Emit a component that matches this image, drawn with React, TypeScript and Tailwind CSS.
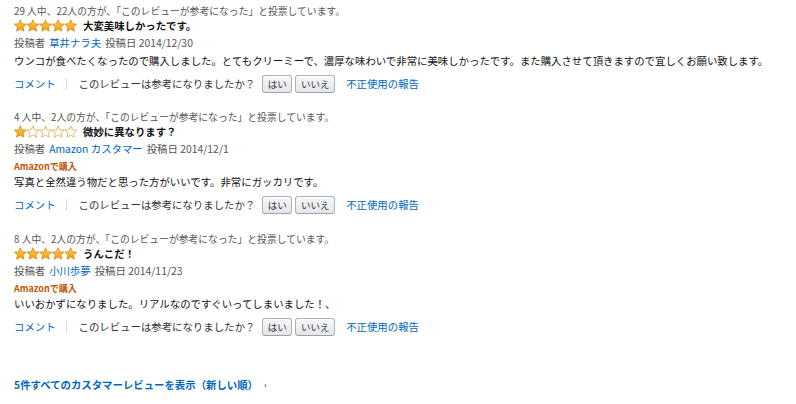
import React from "react";

const FONT = { fontFamily: '"Noto Sans CJK JP", "Noto Sans", sans-serif' };

const STAR =
  "M6.3 0.3 L8 4.25 L12.29 4.65 L9.06 7.5 L10 11.7 L6.3 9.5 L2.6 11.7 L3.54 7.5 L0.31 4.65 L4.6 4.25 Z";

function Stars({ n }: { n: number }) {
  return (
    <svg width="64" height="13" viewBox="0 0 64 13" className="block">
      <defs>
        <linearGradient id="sg" x1="0" y1="0" x2="0" y2="1">
          <stop offset="0" stopColor="#ffcf4f" />
          <stop offset="1" stopColor="#f29b12" />
        </linearGradient>
      </defs>
      {[0, 1, 2, 3, 4].map((i) => (
        <path
          key={i}
          d={STAR}
          transform={`translate(${i * 12.6} 0.5)`}
          fill={i < n ? "url(#sg)" : "#ffffff"}
          stroke={i < n ? "#d68a10" : "#e0a64a"}
          strokeWidth="0.8"
          strokeLinejoin="round"
        />
      ))}
    </svg>
  );
}

function Btn({ children, w }: { children: React.ReactNode; w: string }) {
  return (
    <div
      className={`${w} h-[18px] flex items-center justify-center rounded-[3px] border border-[#adb1b8] border-b-[#9ea2a8] bg-gradient-to-b from-[#f7f8fa] to-[#e4e6ea] text-[9.5px] text-[#333] shadow-[inset_0_1px_0_#ffffff]`}
    >
      {children}
    </div>
  );
}

type Review = {
  votes: string;
  stars: number;
  title: string;
  author: string;
  date: string;
  verified: boolean;
  body: string;
};

const reviews: Review[] = [
  {
    votes: "29 人中、22人の方が、「このレビューが参考になった」と投票しています。",
    stars: 5,
    title: "大変美味しかったです。",
    author: "草井ナラ夫",
    date: "2014/12/30",
    verified: false,
    body: "ウンコが食べたくなったので購入しました。とてもクリーミーで、濃厚な味わいで非常に美味しかったです。また購入させて頂きますので宜しくお願い致します。",
  },
  {
    votes: "4 人中、2人の方が、「このレビューが参考になった」と投票しています。",
    stars: 1,
    title: "微妙に異なります？",
    author: "Amazon カスタマー",
    date: "2014/12/1",
    verified: true,
    body: "写真と全然違う物だと思った方がいいです。非常にガッカリです。",
  },
  {
    votes: "8 人中、2人の方が、「このレビューが参考になった」と投票しています。",
    stars: 5,
    title: "うんこだ！",
    author: "小川歩夢",
    date: "2014/11/23",
    verified: true,
    body: "いいおかずになりました。リアルなのですぐいってしまいました！、",
  },
];

function ReviewBlock({ r, mt }: { r: Review; mt: string }) {
  return (
    <div className={`${mt} flex flex-col`}>
      <div className="h-[16px] flex items-center text-[9.8px] text-[#555] whitespace-nowrap">
        {r.votes}
      </div>
      <div className="h-[13px] flex items-center gap-[5px]">
        <Stars n={r.stars} />
        <span className="text-[10.4px] font-bold text-[#111] whitespace-nowrap">{r.title}</span>
      </div>
      <div className="mt-[2px] h-[18px] flex items-center text-[10.4px] text-[#555] whitespace-nowrap">
        <span>投稿者</span>
        <span className="ml-[4px] text-[#0066c0]">{r.author}</span>
        <span className="ml-[4px]">投稿日 {r.date}</span>
      </div>
      {r.verified && (
        <div className="mt-[3px] h-[12px] flex items-center text-[9px] font-bold text-[#c45500] whitespace-nowrap">
          Amazonで購入
        </div>
      )}
      <div className="h-[18px] flex items-center text-[10.4px] text-[#111] whitespace-nowrap">
        {r.body}
      </div>
      <div className="mt-[4px] h-[20px] flex items-center text-[10.4px] whitespace-nowrap">
        <span className="text-[#0066c0]">コメント</span>
        <span className="ml-[10px] w-px h-[12px] bg-[#dddddd]" />
        <span className="ml-[12px] text-[#333]">このレビューは参考になりましたか？</span>
        <div className="ml-[7px] flex items-center gap-[3px]">
          <Btn w="w-[30px]">はい</Btn>
          <Btn w="w-[40px]">いいえ</Btn>
        </div>
        <span className="ml-[11px] text-[#0066c0]">不正使用の報告</span>
      </div>
    </div>
  );
}

export default function App() {
  return (
    <div style={FONT} className="w-[796px] h-[404px] bg-white overflow-hidden pl-[14px] pt-[3px]">
      <ReviewBlock r={reviews[0]} mt="mt-0" />
      <ReviewBlock r={reviews[1]} mt="mt-[15px]" />
      <ReviewBlock r={reviews[2]} mt="mt-[16px]" />
      <div className="mt-[39px] h-[18px] flex items-center text-[10.4px] font-bold text-[#0066c0] whitespace-nowrap">
        5件すべてのカスタマーレビューを表示（新しい順）
        <span className="ml-[6px] text-[8px] text-[#555]">›</span>
      </div>
    </div>
  );
}
